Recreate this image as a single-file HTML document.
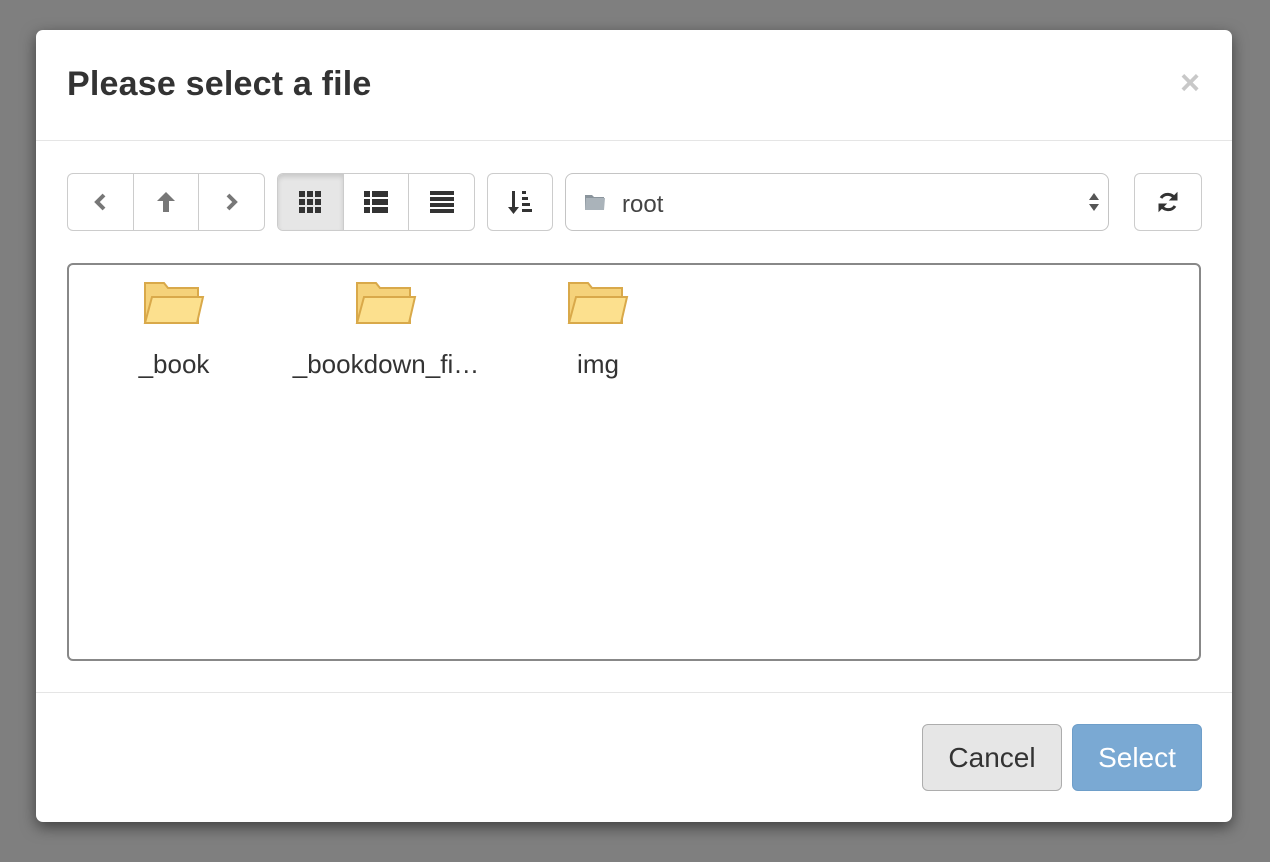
<!DOCTYPE html>
<html><head><style>
body{margin:0;width:1270px;height:862px;background:#7f7f7f;font-family:"Liberation Sans",sans-serif;position:relative;overflow:hidden}
.m{position:absolute;left:36px;top:30px;width:1196px;height:792px;background:#fff;border-radius:7px;box-shadow:0 5px 15px rgba(0,0,0,.5)}
.t{position:absolute;left:31px;top:35px;font-size:34px;color:#333;font-weight:bold;letter-spacing:0.2px}
.x{position:absolute;right:32px;top:34px;font-size:34px;color:#c8c8c8;font-weight:bold}
.hr{position:absolute;left:0;right:0;height:1px;background:#e5e5e5}
.b{position:absolute;top:143px;height:58px;border:1px solid #ccc;box-sizing:border-box;border-radius:6px;display:flex}
.b div{flex:1;display:flex;align-items:center;justify-content:center;border-left:1px solid #ccc}
.b div:first-child{border-left:0}
.act{background:#e6e6e6;box-shadow:inset 0 3px 5px rgba(0,0,0,.125);border-radius:5px 0 0 5px}
.fa{position:absolute;left:31px;top:233px;width:1134px;height:398px;border:2px solid #888;box-sizing:border-box;border-radius:6px}
.f{position:absolute;top:14px;width:212px;text-align:center;font-size:26px;color:#333}
.f svg{display:block;margin:0 auto 22px}
.btn{position:absolute;top:694px;height:67px;border-radius:6px;box-sizing:border-box;font-size:28px;display:flex;align-items:center;justify-content:center}
</style></head><body>
<div class="m">
<div class="t">Please select a file</div>
<div class="x">×</div>
<div class="hr" style="top:110px"></div>
<div class="b" style="left:31px;width:198px">
<div><svg width="16" height="20" viewBox="0 0 16 20"><path d="M12 3 L5 10 L12 17" stroke="#777" stroke-width="4" fill="none"/></svg></div>
<div><svg width="20" height="22" viewBox="0 0 20 22"><path d="M10 1 L19 10 H13 V21 H7 V10 H1Z" fill="#777"/></svg></div>
<div><svg width="16" height="20" viewBox="0 0 16 20"><path d="M4 3 L11 10 L4 17" stroke="#777" stroke-width="4" fill="none"/></svg></div>
</div>
<div class="b" style="left:241px;width:198px">
<div class="act"><svg width="22" height="22" viewBox="0 0 22 22" fill="#333"><rect x="0" y="0" width="6" height="6"/><rect x="8" y="0" width="6" height="6"/><rect x="16" y="0" width="6" height="6"/><rect x="0" y="8" width="6" height="6"/><rect x="8" y="8" width="6" height="6"/><rect x="16" y="8" width="6" height="6"/><rect x="0" y="16" width="6" height="6"/><rect x="8" y="16" width="6" height="6"/><rect x="16" y="16" width="6" height="6"/></svg></div>
<div><svg width="24" height="22" viewBox="0 0 24 22" fill="#333"><rect x="0" y="0" width="6" height="6"/><rect x="8" y="0" width="16" height="6"/><rect x="0" y="8" width="6" height="6"/><rect x="8" y="8" width="16" height="6"/><rect x="0" y="16" width="6" height="6"/><rect x="8" y="16" width="16" height="6"/></svg></div>
<div><svg width="24" height="22" viewBox="0 0 24 22" fill="#333"><rect y="0" width="24" height="4"/><rect y="6" width="24" height="4"/><rect y="12" width="24" height="4"/><rect y="18" width="24" height="4"/></svg></div>
</div>
<div class="b" style="left:451px;width:66px">
<div><svg width="24" height="26" viewBox="0 0 24 26" fill="#333"><rect x="4" y="2" width="3" height="18"/><path d="M0 18 H11 L5.5 25Z"/><rect x="14" y="2" width="4" height="3"/><rect x="14" y="8" width="6" height="3"/><rect x="14" y="14" width="8" height="3"/><rect x="14" y="20" width="10" height="3"/></svg></div>
</div>
<div class="b" style="left:529px;width:544px;justify-content:flex-start;align-items:center;font-size:24px;color:#555;border-radius:8px;border-color:#c4c4c4">
<svg style="margin-left:18px" width="22" height="20" viewBox="0 0 22 20"><path d="M1 3 H8 L10 5 H20 V18 H1Z" fill="#8a949c"/><path d="M2 6 H21 L20 18 H1Z" fill="#aab3ba"/></svg>
<span style="margin-left:16px;color:#444;position:relative;top:3px">root</span>
<svg style="position:absolute;right:8px;top:17px" width="12" height="22" viewBox="0 0 12 22" fill="#555"><path d="M6 2 L11 9 H1Z M6 20 L11 13 H1Z"/></svg>
</div>
<div class="b" style="left:1098px;width:68px">
<div><svg width="24" height="24" viewBox="0 0 24 24" fill="none" stroke="#333" stroke-width="3"><path d="M19 9 A8 8 0 0 0 5 8"/><path d="M5 15 A8 8 0 0 0 19 16"/><path d="M21 3 V10 H14Z" fill="#333" stroke-width="1"/><path d="M3 21 V14 H10Z" fill="#333" stroke-width="1"/></svg></div>
</div>
<div class="fa">
<div class="f" style="left:-1px"><svg width="64" height="48" viewBox="0 0 64 48"><path d="M3 4 H22 L26 9 H56 V44 H3Z" fill="#f5d27a" stroke="#d9a94a" stroke-width="2"/><path d="M10 18 H61 L55 44 H3Z" fill="#fce08e" stroke="#d9a94a" stroke-width="2"/></svg>_book</div>
<div class="f" style="left:211px"><svg width="64" height="48" viewBox="0 0 64 48"><path d="M3 4 H22 L26 9 H56 V44 H3Z" fill="#f5d27a" stroke="#d9a94a" stroke-width="2"/><path d="M10 18 H61 L55 44 H3Z" fill="#fce08e" stroke="#d9a94a" stroke-width="2"/></svg>_bookdown_fi…</div>
<div class="f" style="left:423px"><svg width="64" height="48" viewBox="0 0 64 48"><path d="M3 4 H22 L26 9 H56 V44 H3Z" fill="#f5d27a" stroke="#d9a94a" stroke-width="2"/><path d="M10 18 H61 L55 44 H3Z" fill="#fce08e" stroke="#d9a94a" stroke-width="2"/></svg>img</div>
</div>
<div class="hr" style="top:662px"></div>
<div class="btn" style="left:886px;width:140px;background:#e6e6e6;border:1px solid #adadad;color:#333">Cancel</div>
<div class="btn" style="left:1036px;width:130px;background:#7aa9d3;border:1px solid #6e9ec9;color:#fff">Select</div>
</div>
</body></html>
